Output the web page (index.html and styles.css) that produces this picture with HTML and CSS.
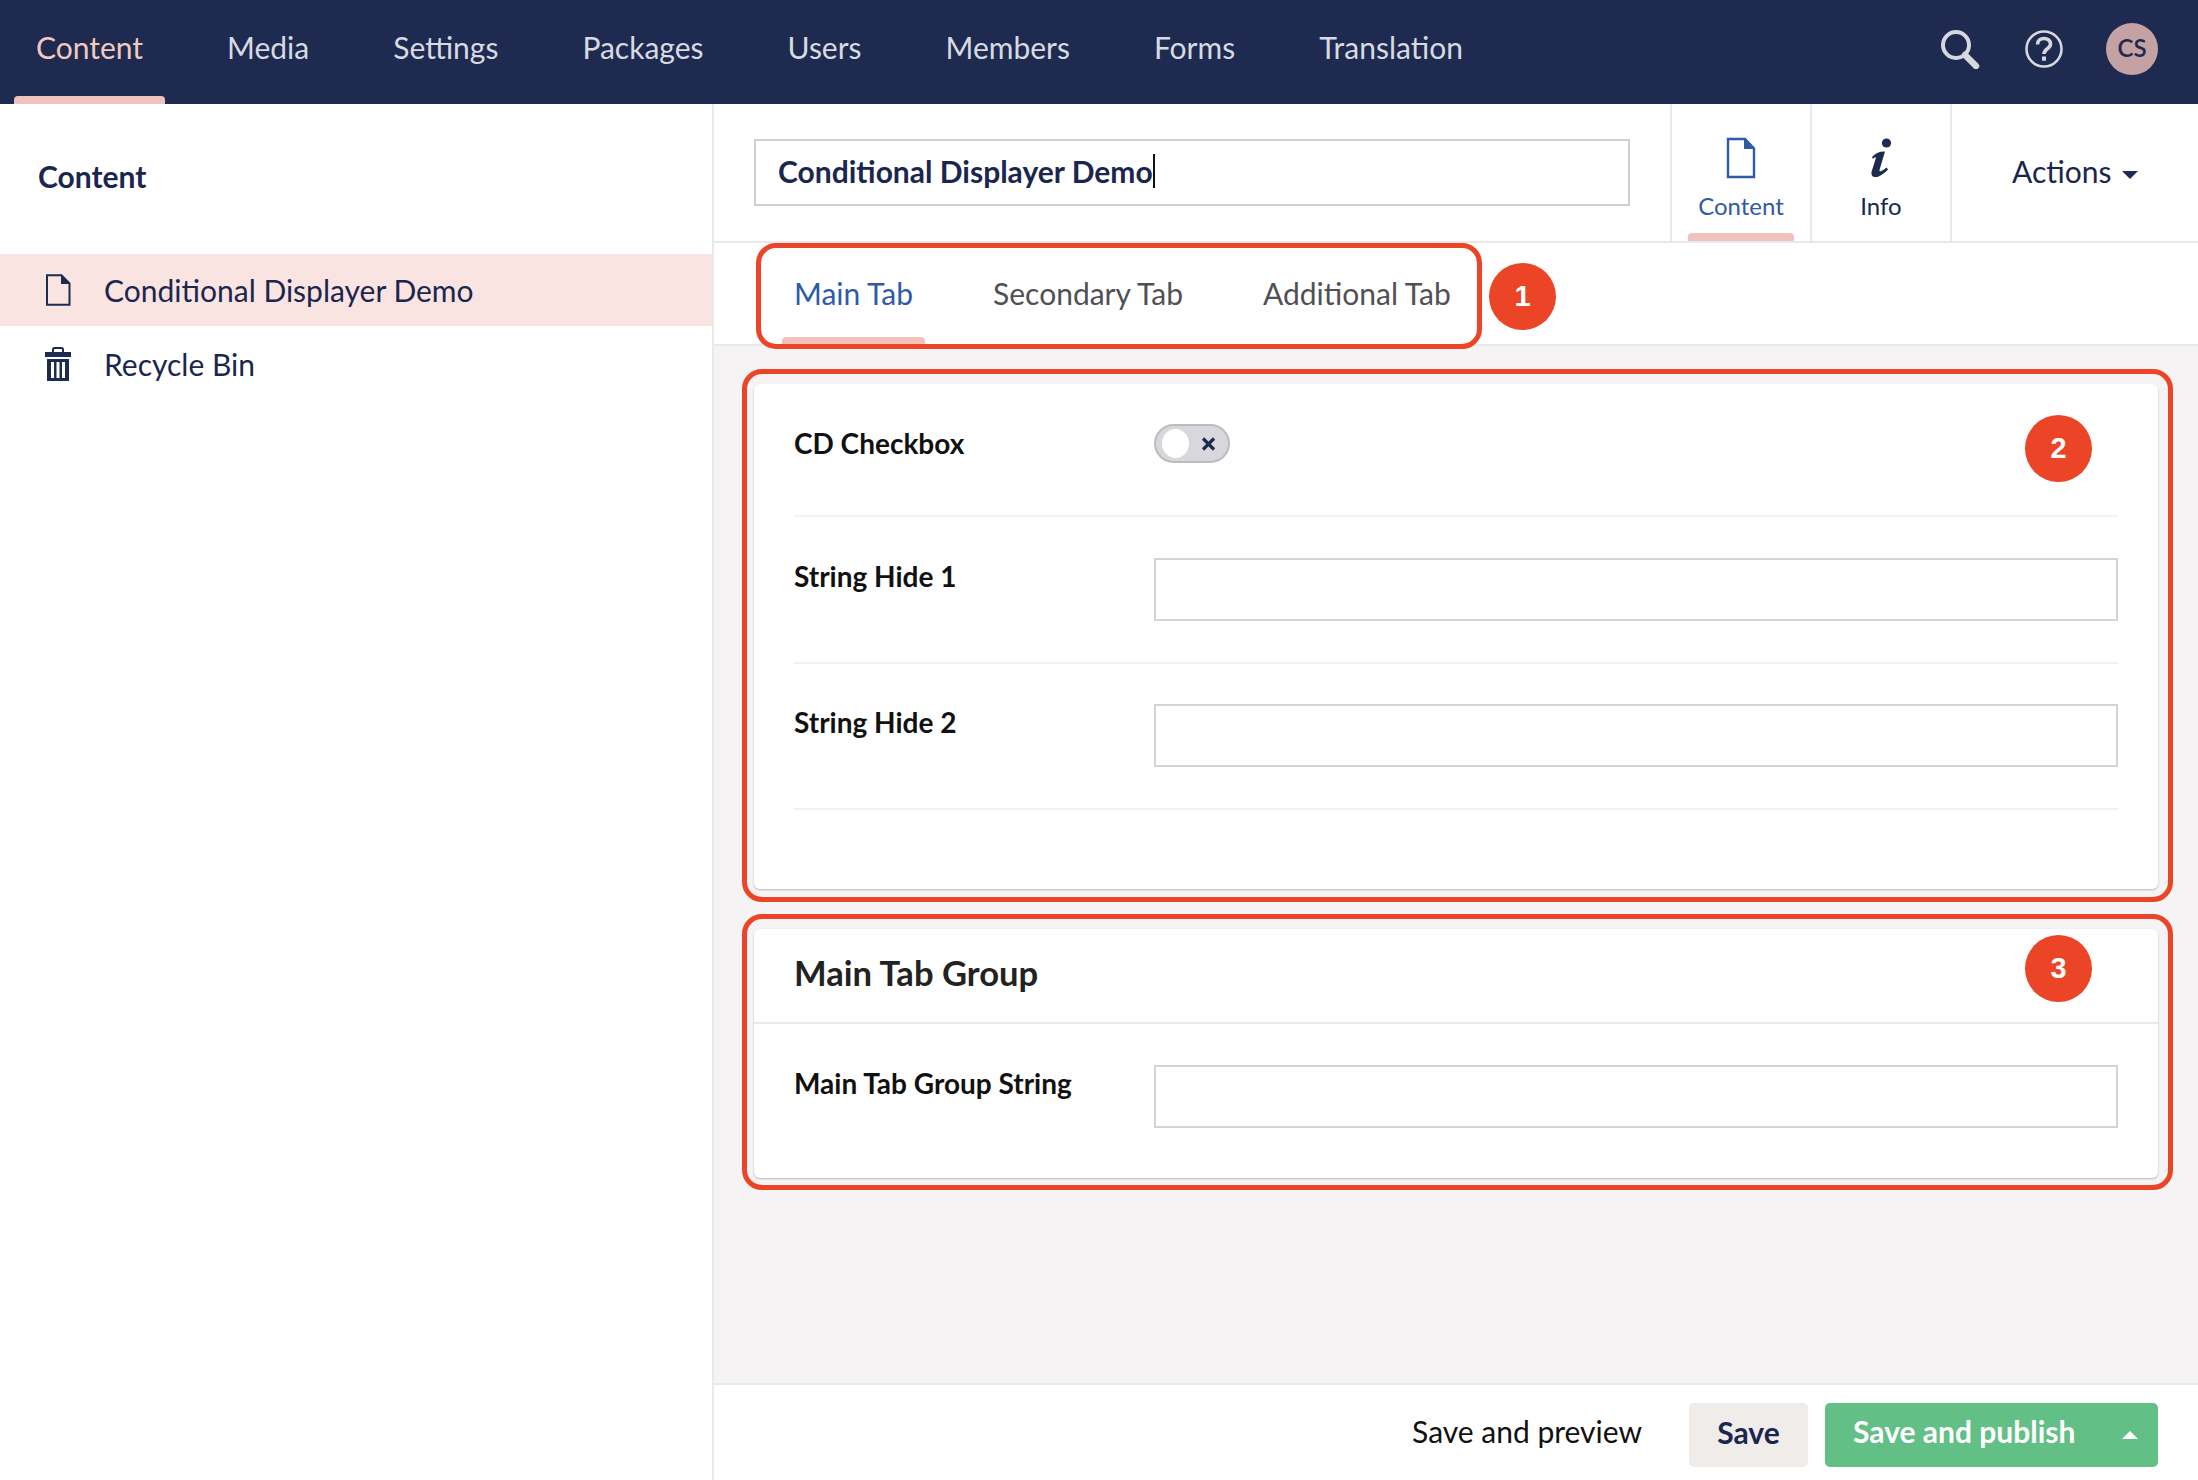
FILE: index.html
```html
<!DOCTYPE html>
<html lang="en">
<head>
    <meta charset="UTF-8">
    <meta name="viewport" content="width=device-width, initial-scale=1.0">
    <title>Conditional Displayer Demo - Content</title>
    <link rel="stylesheet" href="styles.css">
</head>
<body>
    <div id="app">
        <header class="topbar">
            <nav class="topnav">
                <a class="topnav-item active">Content</a>
                <a class="topnav-item">Media</a>
                <a class="topnav-item">Settings</a>
                <a class="topnav-item">Packages</a>
                <a class="topnav-item">Users</a>
                <a class="topnav-item">Members</a>
                <a class="topnav-item">Forms</a>
                <a class="topnav-item">Translation</a>
            </nav>
            <div class="topbar-tools">
                <svg class="tool-icon" width="40" height="40" viewBox="0 0 40 40">
                    <circle cx="16" cy="16" r="13" fill="none" stroke="#d6d8de" stroke-width="4"/>
                    <path d="M25 26 L36 37" stroke="#d6d8de" stroke-width="6.5" stroke-linecap="round"/>
                </svg>
                <svg class="tool-icon" width="40" height="40" viewBox="0 0 40 40">
                    <circle cx="20" cy="20" r="17.5" fill="none" stroke="#d6d8de" stroke-width="2.6"/>
                    <path d="M13.5 15.5 C13.5 7.5 26.5 7.5 26.5 15 C26.5 20 20 19.5 20 25" fill="none" stroke="#d6d8de" stroke-width="3.6"/>
                    <rect x="18" y="27.5" width="4" height="4.2" fill="#d6d8de"/>
                </svg>
                <div class="avatar">CS</div>
            </div>
        </header>

        <div class="layout">
            <aside class="sidebar">
                <h3 class="sidebar-title">Content</h3>
                <ul class="tree">
                    <li class="tree-item selected">
                        <svg width="26" height="32" viewBox="0 0 26 32">
                            <path d="M2 1.2 H16.5 L24.5 9.5 V30.8 H2 Z" fill="none" stroke="#1e2a4f" stroke-width="2"/>
                            <path d="M16 1 L25 10 H16 Z" fill="#1e2a4f"/>
                        </svg>
                        <span>Conditional Displayer Demo</span>
                    </li>
                    <li class="tree-item">
                        <svg width="26" height="34" viewBox="0 0 26 34">
                            <path d="M8 5 V2.5 Q8 1 9.5 1 H16.5 Q18 1 18 2.5 V5" fill="none" stroke="#1e2a4f" stroke-width="2"/>
                            <path d="M0 5 H26 V10 H0 Z" fill="#1e2a4f"/>
                            <path fill-rule="evenodd" d="M2 12 H24 V34 H2 Z M6 15 V31 H9 V15 Z M11.5 15 V31 H14.5 V15 Z M17 15 V31 H20 V15 Z" fill="#1e2a4f"/>
                        </svg>
                        <span>Recycle Bin</span>
                    </li>
                </ul>
            </aside>

            <main class="editor">
                <div class="editor-head">
                    <div class="name-input"><span class="name-text">Conditional Displayer Demo</span></div>
                    <div class="view-btn active">
                        <svg width="30" height="42" viewBox="0 0 30 42">
                            <path d="M2 2 H19 L28 11.5 V40 H2 Z" fill="none" stroke="#2f5aa8" stroke-width="2.4"/>
                            <path d="M18 1 L29 12 H18 Z" fill="#2f5aa8"/>
                        </svg>
                        <span>Content</span>
                    </div>
                    <div class="view-btn">
                        <svg width="30" height="42" viewBox="0 0 30 42">
                            <circle cx="20.5" cy="6" r="4.6" fill="#1e2a4f"/>
                            <path d="M6 20 C10 15.5 15 14 19 14.5 L13.5 33 C13.2 35 15 35 20.5 30.5 L22 32.5 C16 38.5 12 40.5 8.5 40 C5.5 39.5 5 37 5.8 34 L10 20.5 C9 20 8 21 7 22 Z" fill="#1e2a4f"/>
                        </svg>
                        <span>Info</span>
                    </div>
                    <div class="actions">Actions <i class="caret-down"></i></div>
                </div>

                <div class="tabs">
                    <a class="tab active">Main Tab</a>
                    <a class="tab">Secondary Tab</a>
                    <a class="tab">Additional Tab</a>
                </div>

                <div class="content">
                    <section class="card">
                        <div class="row first">
                            <label class="row-label">CD Checkbox</label>
                            <div class="toggle">
                                <span class="knob"></span>
                                <svg width="15" height="14" viewBox="0 0 15 14">
                                    <path d="M2 1.5 L13 12.5 M13 1.5 L2 12.5" stroke="#1e2a4f" stroke-width="3.2"/>
                                </svg>
                            </div>
                        </div>
                        <div class="row">
                            <label class="row-label">String Hide 1</label>
                            <input class="text-input" type="text">
                        </div>
                        <div class="row">
                            <label class="row-label">String Hide 2</label>
                            <input class="text-input" type="text">
                        </div>
                    </section>

                    <section class="card group">
                        <h4 class="group-title">Main Tab Group</h4>
                        <div class="group-body">
                            <label class="row-label">Main Tab Group String</label>
                            <input class="text-input" type="text">
                        </div>
                    </section>
                </div>

                <footer class="footer">
                    <span class="preview">Save and preview</span>
                    <button class="btn btn-save">Save</button>
                    <button class="btn btn-publish"><span>Save and publish</span><i class="caret-up"></i></button>
                </footer>
            </main>
        </div>

        <!-- annotations drawn over the screenshot -->
        <div class="mark mark-tabs"></div>
        <div class="mark mark-props"></div>
        <div class="mark mark-group"></div>
        <div class="badge badge-1">1</div>
        <div class="badge badge-2">2</div>
        <div class="badge badge-3">3</div>
    </div>
</body>
</html>
```

FILE: styles.css
```css
* {
    box-sizing: border-box;
}

body {
    margin: 0;
    font-family: Lato, "Open Sans", sans-serif;
    color: #1b264f;
    background: #fff;
}

#app {
    position: relative;
    width: 2198px;
    height: 1480px;
    overflow: hidden;
    display: flex;
    flex-direction: column;
}

/* top bar */
.topbar {
    height: 104px;
    flex: none;
    background: #1e2a4f;
    display: flex;
    align-items: center;
    justify-content: space-between;
    padding: 0 40px 0 14px;
}

.topnav {
    display: flex;
    gap: 40px;
    height: 100%;
}

.topnav-item {
    position: relative;
    display: flex;
    align-items: center;
    padding: 0 22px 11px;
    font-size: 30px;
    color: #d8dae2;
}

.topnav-item.active {
    color: #f3c9bf;
}

.topnav-item.active::after {
    content: "";
    position: absolute;
    left: 0;
    right: 0;
    bottom: 0;
    height: 8px;
    background: #efc3bc;
    border-radius: 4px 4px 0 0;
}

.topbar-tools {
    display: flex;
    align-items: center;
    gap: 44px;
    margin-bottom: 6px;
}

.tool-icon:nth-child(2) {
    margin-right: -2px;
}

.avatar {
    width: 52px;
    height: 52px;
    border-radius: 50%;
    background: #c4a1a3;
    color: #1e2a4f;
    font-size: 24px;
    font-weight: 600;
    padding-bottom: 3px;
    display: flex;
    align-items: center;
    justify-content: center;
}

/* sidebar */
.layout {
    flex: 1;
    display: flex;
    min-height: 0;
}

.sidebar {
    width: 714px;
    flex: none;
    border-right: 2px solid #e9e9eb;
}

.sidebar-title {
    margin: 0;
    padding: 54px 0 0 38px;
    height: 150px;
    font-size: 30px;
    line-height: 36px;
    font-weight: 700;
}

.tree {
    list-style: none;
    margin: 0;
    padding: 0;
}

.tree-item {
    height: 72px;
    display: flex;
    align-items: center;
    gap: 33px;
    padding-left: 45px;
    font-size: 30px;
}

.tree-item.selected {
    background: #f9e4e2;
    margin-bottom: 2px;
}

/* editor */
.editor {
    flex: 1;
    min-width: 0;
    display: flex;
    flex-direction: column;
}

.editor-head {
    height: 139px;
    flex: none;
    display: flex;
    align-items: stretch;
    border-bottom: 2px solid #e9e9eb;
    padding-left: 40px;
}

.name-input {
    width: 876px;
    height: 67px;
    margin: 35px 40px 0 0;
    padding: 0 0 3px 22px;
    border: 2px solid #cfcfcf;
    display: flex;
    align-items: center;
    font-size: 30px;
    font-weight: 700;
    color: #1b264f;
}

.name-text {
    border-right: 2px solid #111;
    line-height: 34px;
}

.view-btn {
    position: relative;
    width: 140px;
    border-left: 2px solid #e9e9eb;
    display: flex;
    flex-direction: column;
    align-items: center;
    padding-top: 33px;
    font-size: 24px;
}

.view-btn svg {
    margin-bottom: 12px;
}

.view-btn.active {
    color: #2f5aa8;
}

.view-btn.active::after {
    content: "";
    position: absolute;
    left: 16px;
    right: 16px;
    bottom: 0;
    height: 8px;
    background: #efc3bc;
    border-radius: 4px 4px 0 0;
}

.actions {
    flex: 1;
    border-left: 2px solid #e9e9eb;
    padding: 49px 0 0 60px;
    font-size: 30px;
}

.caret-down {
    display: inline-block;
    vertical-align: middle;
    margin-left: 3px;
    border-left: 8px solid transparent;
    border-right: 8px solid transparent;
    border-top: 8px solid #1e2a4f;
}

.tabs {
    height: 103px;
    flex: none;
    display: flex;
    gap: 56px;
    padding-left: 68px;
    border-bottom: 2px solid #e9e9eb;
}

.tab {
    position: relative;
    display: flex;
    align-items: center;
    padding: 0 12px 2px;
    font-size: 30px;
    color: #515054;
}

.tab.active {
    color: #2f5aa8;
}

.tab.active::after {
    content: "";
    position: absolute;
    left: 0;
    right: 0;
    bottom: 0;
    height: 7px;
    background: #efc3bc;
    border-radius: 4px 4px 0 0;
}

.content {
    flex: 1;
    background: #f5f3f4;
    padding: 38px 40px 0;
    display: flex;
    flex-direction: column;
    gap: 40px;
}

.card {
    background: #fff;
    border-radius: 6px;
    box-shadow: 0 1px 2px rgba(0, 0, 0, 0.25);
    padding: 40px 40px 0;
    height: 505px;
}

.row {
    display: flex;
    padding-bottom: 41px;
    margin-bottom: 40px;
    border-bottom: 2px solid #f3f2f3;
}

.row.first {
    padding-bottom: 52px;
    margin-bottom: 41px;
}

.row-label {
    width: 360px;
    flex: none;
    font-size: 28px;
    font-weight: 700;
    line-height: 36px;
    color: #111;
}

.row.first .row-label {
    line-height: 38px;
}

.text-input {
    flex: 1;
    min-width: 0;
    height: 63px;
    border: 2px solid #d4d4d4;
    background: #fff;
    font-size: 28px;
}

.toggle {
    width: 76px;
    height: 39px;
    border-radius: 20px;
    background: #d8d8dc;
    border: 2px solid #bdbdc0;
    display: flex;
    align-items: center;
    justify-content: space-between;
    padding: 0 12px 0 6px;
}

.knob {
    width: 27px;
    height: 29px;
    border-radius: 50%;
    background: #fff;
}

.card.group {
    height: 249px;
    padding: 0;
}

.group-title {
    margin: 0;
    height: 95px;
    padding: 24px 0 0 40px;
    font-size: 34.6px;
    line-height: 40px;
    font-weight: 700;
    color: #222;
    border-bottom: 2px solid #e9e9eb;
}

.group-body {
    display: flex;
    padding: 41px 40px 0;
}

/* footer */
.footer {
    height: 97px;
    flex: none;
    border-top: 2px solid #e9e9eb;
    display: flex;
    align-items: flex-start;
    padding: 18px 40px 0 0;
    justify-content: flex-end;
}

.preview {
    font-size: 30px;
    line-height: 56px;
    color: #111;
    margin-right: 47px;
}

.btn {
    height: 64px;
    border: none;
    border-radius: 5px;
    padding-bottom: 8px;
    font-family: inherit;
    font-size: 30px;
    font-weight: 700;
}

.btn-save {
    width: 119px;
    background: #f0ece9;
    color: #1b264f;
    margin-right: 17px;
}

.btn-publish {
    width: 333px;
    background: #62c087;
    color: #fff;
    display: flex;
    align-items: center;
    justify-content: space-between;
    padding: 0 20px 8px 28px;
}

.caret-up {
    margin-top: 8px;
    border-left: 8px solid transparent;
    border-right: 8px solid transparent;
    border-bottom: 8px solid #fff;
}

/* annotations */
.mark {
    position: absolute;
    border: 5px solid #ec4426;
    border-radius: 20px;
    pointer-events: none;
}

.mark-tabs {
    left: 756px;
    top: 243px;
    width: 726px;
    height: 106px;
}

.mark-props {
    left: 742px;
    top: 369px;
    width: 1431px;
    height: 533px;
}

.mark-group {
    left: 742px;
    top: 914px;
    width: 1431px;
    height: 276px;
}

.badge {
    position: absolute;
    width: 67px;
    height: 67px;
    border-radius: 50%;
    background: #ec4426;
    color: #fff;
    font-family: "Liberation Sans", Arial, sans-serif;
    font-size: 29px;
    font-weight: 700;
    display: flex;
    align-items: center;
    justify-content: center;
}

.badge-1 {
    left: 1489px;
    top: 263px;
}

.badge-2 {
    left: 2025px;
    top: 415px;
}

.badge-3 {
    left: 2025px;
    top: 935px;
}
```
